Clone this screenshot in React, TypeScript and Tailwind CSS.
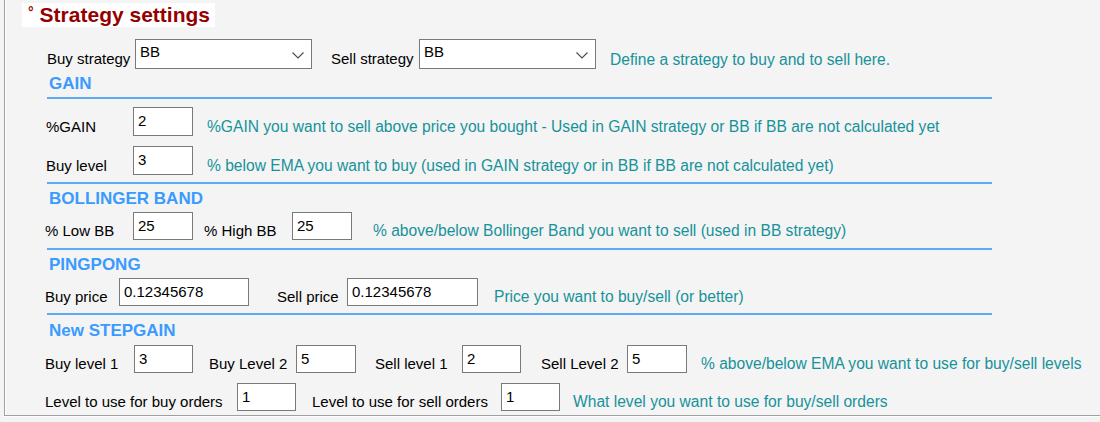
import type { ReactNode } from "react";

// small building blocks for the WinForms-like settings panel
function Label({ className, children }: { className: string; children: ReactNode }) {
    return <div className={`shrink-0 whitespace-nowrap text-[15px] leading-[18px] text-black ${className}`}>{children}</div>;
}

function Field({ className, value }: { className: string; value: string }) {
    return (
        <div className={`shrink-0 h-[28px] border border-[#7a7a7a] bg-white pl-[4px] pt-[4px] text-[15px] leading-[18px] text-black ${className}`}>
            {value}
        </div>
    );
}

function Combo({ className, value }: { className: string; value: string }) {
    return (
        <div className={`shrink-0 h-[30px] flex justify-between border border-[#7a7a7a] bg-white pl-[4px] pt-[3px] pr-[7px] text-[15px] leading-[18px] text-black ${className}`}>
            <span>{value}</span>
            <svg width="12" height="7" viewBox="0 0 12 7" className="mt-[9px]">
                <polyline points="0.5,0.5 6,6 11.5,0.5" fill="none" stroke="#4a4a4a" strokeWidth="1.1" />
            </svg>
        </div>
    );
}

function Hint({ className, children }: { className: string; children: ReactNode }) {
    return <div className={`shrink-0 whitespace-nowrap text-[15.6px] leading-[18px] text-[#16929a] ${className}`}>{children}</div>;
}

function Heading({ className, children }: { className: string; children: ReactNode }) {
    return <div className={`ml-[44px] h-[20px] text-[17px] leading-[20px] font-bold text-[#3a9bff] ${className}`}>{children}</div>;
}

function Rule({ className }: { className: string }) {
    return <div className={`ml-[42px] w-[945px] h-[2px] bg-[#5eaaf6] ${className}`} />;
}

export default function App() {
    return (
        <div className="w-[1100px] h-[422px] bg-[#f4f4f4] font-['Liberation_Sans',Arial,sans-serif] overflow-hidden">
            <div className="ml-[4px] h-[416px] flex flex-col border-l border-b border-[#a0a0a0] shadow-[inset_1px_0_0_#ffffff,0_1px_0_#ffffff]">
                <div className="mt-[3px] ml-[17px] self-start h-[24px] flex items-start bg-white pl-[6px] pr-[5px] text-[21px] leading-[24px] font-bold text-[#940000]">
                    <span className="text-[14px] leading-[18px] mr-[6px]">°</span>
                    <span>Strategy settings</span>
                </div>

                <div className="mt-[12px] pl-[42px] flex items-end">
                    <Label className="w-[88px] mb-[1px]">Buy strategy</Label>
                    <Combo className="w-[177px]" value="BB" />
                    <Label className="ml-[19px] w-[88px] mb-[1px]">Sell strategy</Label>
                    <Combo className="w-[177px]" value="BB" />
                    <Hint className="ml-[14px]">Define a strategy to buy and to sell here.</Hint>
                </div>

                <Heading className="mt-[5px]">GAIN</Heading>
                <Rule className="mt-[3px]" />

                <div className="mt-[8px] pl-[41px] flex items-end">
                    <Label className="w-[87px]">%GAIN</Label>
                    <Field className="w-[60px] h-[29px]" value="2" />
                    <Hint className="ml-[14px]">%GAIN you want to sell above price you bought - Used in GAIN strategy or BB if BB are not calculated yet</Hint>
                </div>
                <div className="mt-[10px] pl-[41px] flex items-end">
                    <Label className="w-[87px]">Buy level</Label>
                    <Field className="w-[60px] h-[29px]" value="3" />
                    <Hint className="ml-[14px]">% below EMA you want to buy (used in GAIN strategy or in BB if BB are not calculated yet)</Hint>
                </div>
                <Rule className="mt-[7px]" />

                <Heading className="mt-[5px]">BOLLINGER BAND</Heading>
                <div className="mt-[3px] pl-[40px] flex items-end">
                    <Label className="w-[88px]">% Low BB</Label>
                    <Field className="w-[60px]" value="25" />
                    <Label className="ml-[11px] w-[88px]">% High BB</Label>
                    <Field className="w-[60px]" value="25" />
                    <Hint className="ml-[21px]">% above/below Bollinger Band you want to sell (used in BB strategy)</Hint>
                </div>
                <Rule className="mt-[8px]" />

                <Heading className="mt-[5px]">PINGPONG</Heading>
                <div className="mt-[3px] pl-[40px] flex items-end">
                    <Label className="w-[74px]">Buy price</Label>
                    <Field className="w-[130px]" value="0.12345678" />
                    <Label className="ml-[28px] w-[70px]">Sell price</Label>
                    <Field className="w-[131px]" value="0.12345678" />
                    <Hint className="ml-[16px]">Price you want to buy/sell (or better)</Hint>
                </div>
                <Rule className="mt-[7px]" />

                <Heading className="mt-[6px]">New STEPGAIN</Heading>
                <div className="mt-[4px] pl-[40px] flex items-end">
                    <Label className="w-[89px]">Buy level 1</Label>
                    <Field className="w-[59px]" value="3" />
                    <Label className="ml-[16px] w-[87px]">Buy Level 2</Label>
                    <Field className="w-[60px]" value="5" />
                    <Label className="ml-[19px] w-[87px]">Sell level 1</Label>
                    <Field className="w-[59px]" value="2" />
                    <Label className="ml-[20px] w-[86px]">Sell Level 2</Label>
                    <Field className="w-[60px]" value="5" />
                    <Hint className="ml-[14px]">% above/below EMA you want to use for buy/sell levels</Hint>
                </div>
                <div className="mt-[10px] pl-[40px] flex items-end">
                    <Label className="w-[192px]">Level to use for buy orders</Label>
                    <Field className="w-[59px]" value="1" />
                    <Label className="ml-[16px] w-[189px]">Level to use for sell orders</Label>
                    <Field className="w-[59px]" value="1" />
                    <Hint className="ml-[13px]">What level you want to use for buy/sell orders</Hint>
                </div>
            </div>
        </div>
    );
}
